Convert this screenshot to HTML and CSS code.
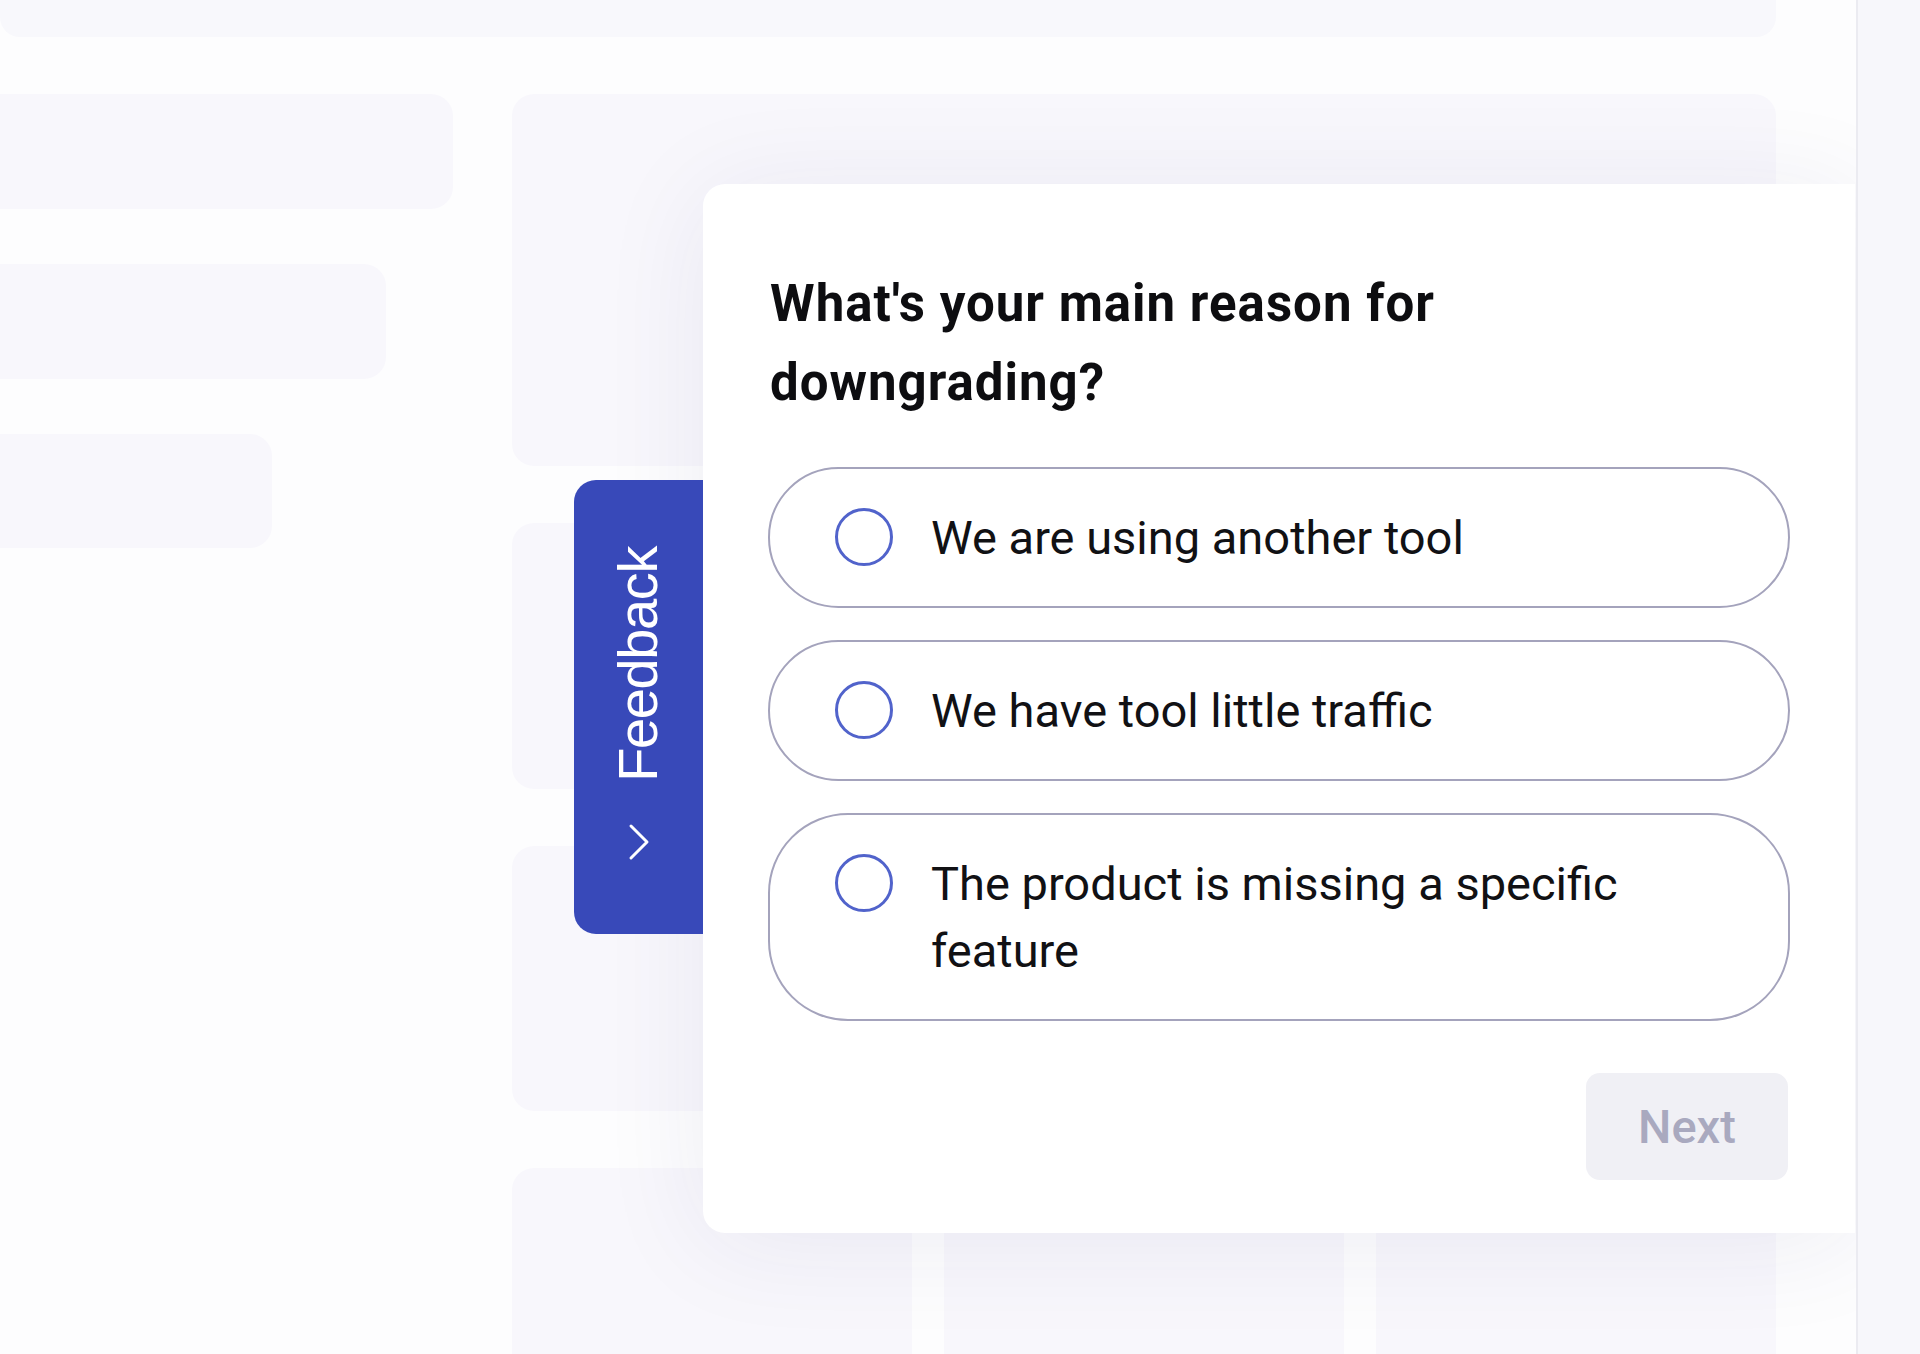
FILE: index.html
```html
<!DOCTYPE html>
<html lang="en">
<head>
<meta charset="utf-8">
<title>Feedback survey</title>
<link rel="stylesheet" href="styles.css">
</head>
<body>
<div class="page">
  <div class="main">
    <div class="topbar"></div>
    <div class="content">
      <div class="side">
        <div class="sk side-1"></div>
        <div class="sk side-2"></div>
        <div class="sk side-3"></div>
      </div>
      <div class="col">
        <div class="sk blk-a"></div>
        <div class="sk blk-b"></div>
        <div class="sk blk-c"></div>
        <div class="row">
          <div class="sk cell"></div>
          <div class="sk cell"></div>
          <div class="sk cell"></div>
        </div>
      </div>
    </div>
  </div>
  <aside class="panel"></aside>

  <section class="survey">
    <button class="tab" type="button">
      <span class="tab-label">Feedback</span>
      <svg class="tab-icon" viewBox="0 0 22 38" width="22" height="38" aria-hidden="true">
        <path d="M3 3 L19 19 L3 35" fill="none" stroke="#ffffff" stroke-width="3" stroke-linecap="round" stroke-linejoin="round"/>
      </svg>
    </button>
    <h2 class="question">What's your main reason for downgrading?</h2>
    <div class="options">
      <label class="option"><span class="radio"></span><span class="option-text">We are using another tool</span></label>
      <label class="option"><span class="radio"></span><span class="option-text">We have tool little traffic</span></label>
      <label class="option"><span class="radio"></span><span class="option-text">The product is missing a specific feature</span></label>
    </div>
    <div class="actions">
      <button class="next" type="button">Next</button>
    </div>
  </section>
</div>
</body>
</html>
```

FILE: styles.css
```css
* { box-sizing: border-box; }

html, body {
  margin: 0;
  padding: 0;
  background: #fdfdfe;
  width: 1920px;
  height: 1354px;
  overflow: hidden;
}

body {
  font-family: Roboto, "Noto Sans", sans-serif;
  color: #111114;
}

.page {
  position: relative;
  display: flex;
  width: 1920px;
  height: 1354px;
  overflow: hidden;
}

.main {
  width: 1856px;
  flex: none;
}

.topbar {
  width: 1776px;
  height: 37px;
  background: #f8f8fc;
  border-radius: 0 0 20px 20px;
}

.content {
  display: flex;
  gap: 59px;
  margin-top: 57px;
}

.side {
  width: 453px;
  display: flex;
  flex-direction: column;
  gap: 55px;
}

.sk {
  background: #f8f7fc;
  border-radius: 22px;
}

.side-1 { width: 453px; height: 115px; border-radius: 0 22px 22px 0; }
.side-2 { width: 386px; height: 115px; border-radius: 0 22px 22px 0; }
.side-3 { width: 272px; height: 114px; border-radius: 0 22px 22px 0; }

.col {
  width: 1264px;
  display: flex;
  flex-direction: column;
  gap: 57px;
}

.blk-a { height: 372px; }
.blk-b { height: 266px; }
.blk-c { height: 265px; }

.row {
  display: grid;
  grid-template-columns: repeat(3, 1fr);
  gap: 32px;
}

.cell { height: 300px; }

.panel {
  width: 64px;
  flex: none;
  height: 1354px;
  background: #f7f7fb;
  border-left: 2px solid #ebebf1;
  position: relative;
  z-index: 3;
}

/* Survey popup */
.survey {
  position: absolute;
  left: 703px;
  top: 184px;
  width: 1152px;
  padding: 80px 65px 53px 67px;
  background: #ffffff;
  border-radius: 22px 0 0 22px;
  box-shadow: 0 10px 110px rgba(40, 40, 110, 0.075);
  z-index: 2;
}

.tab {
  position: absolute;
  left: -129px;
  top: 296px;
  width: 129px;
  height: 454px;
  padding: 67px 0 0;
  margin: 0;
  border: 0;
  border-radius: 22px 0 0 22px;
  background: #3849b9;
  display: flex;
  flex-direction: column;
  align-items: center;
  gap: 41px;
  cursor: pointer;
}

.tab-label {
  writing-mode: vertical-rl;
  transform: rotate(180deg);
  font-family: "Liberation Sans", Arial, sans-serif;
  font-size: 56px;
  line-height: 1;
  letter-spacing: -1.4px;
  color: #ffffff;
  margin-left: -2px;
}

.tab-icon {
  display: block;
  flex: none;
}

.question {
  margin: 0 0 45px;
  font-family: Roboto, "Noto Sans", sans-serif;
  font-weight: 700;
  font-size: 51px;
  letter-spacing: 1px;
  line-height: 79px;
  color: #0d0d10;
  max-width: 720px;
}

.options {
  display: flex;
  flex-direction: column;
  gap: 32px;
  margin-left: -2px;
}

.option {
  display: flex;
  align-items: flex-start;
  gap: 38px;
  padding: 35px 67px 35px 65px;
  border: 2px solid #a4a3bc;
  border-radius: 80px;
  background: #ffffff;
  cursor: pointer;
}

.radio {
  flex: none;
  width: 58px;
  height: 58px;
  margin-top: 4px;
  border: 3px solid #5163cb;
  border-radius: 50%;
}

.option-text {
  font-family: Roboto, "Noto Sans", sans-serif;
  font-size: 47px;
  line-height: 67px;
  color: #111114;
}

.actions {
  display: flex;
  justify-content: flex-end;
  margin-top: 52px;
}

.next {
  width: 202px;
  height: 107px;
  border: 0;
  border-radius: 14px;
  background: #f0f0f5;
  color: #a9a9bf;
  font-family: Roboto, "Noto Sans", sans-serif;
  font-weight: 500;
  font-size: 47px;
  margin-right: 2px;
  cursor: default;
}
```
